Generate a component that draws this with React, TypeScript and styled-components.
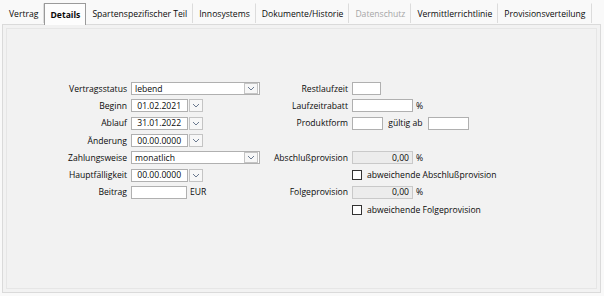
import React from "react";
import styled, { createGlobalStyle } from "styled-components";

const GlobalStyle = createGlobalStyle`
  html, body {
    margin: 0;
    padding: 0;
    background: #f9f9f9;
  }
  body {
    font-family: "Open Sans", "Noto Sans", sans-serif;
    font-size: 8.6px;
    color: #0a0a0a;
  }
`;

const tabs = [
  "Vertrag",
  "Details",
  "Spartenspezifischer Teil",
  "Innosystems",
  "Dokumente/Historie",
  "Datenschutz",
  "Vermittlerrichtlinie",
  "Provisionsverteilung",
];

const Window = styled.div`
  width: 604px;
  height: 296px;
  display: flex;
  flex-direction: column;
  overflow: hidden;
`;

const TabBar = styled.div`
  display: flex;
  align-items: flex-end;
  height: 24px;
  padding-left: 3px;
`;

const Tab = styled.div<{ $active?: boolean; $disabled?: boolean }>`
  height: ${(p) => (p.$active ? "21px" : "19px")};
  display: flex;
  align-items: center;
  padding: 0 5px;
  margin-bottom: ${(p) => (p.$active ? "-1px" : "1px")};
  font-weight: ${(p) => (p.$active ? 700 : 400)};
  color: ${(p) => (p.$disabled ? "#a6a6a6" : "#0a0a0a")};
  background: ${(p) => (p.$active ? "#fdfdfd" : "transparent")};
  border: 1px solid ${(p) => (p.$active ? "#9a9a9a" : "transparent")};
  border-bottom: none;
  border-right: 1px solid ${(p) => (p.$active ? "#9a9a9a" : "#dcdcdc")};
  position: relative;
  z-index: ${(p) => (p.$active ? 1 : 0)};
  white-space: nowrap;
`;

const Panel = styled.div`
  flex: 1;
  margin: 0 3px 3px 2px;
  background: #f2f2f2;
  border: 1px solid #dadada;
  box-shadow: inset 0 0 0 3px #f2f2f2, inset 0 0 0 4px #e6e6e6;
  display: flex;
  padding-top: 55px;
  padding-left: 44px;
`;

const Column = styled.div<{ $label: number; $offset?: number }>`
  display: grid;
  grid-template-columns: ${(p) => p.$label}px auto;
  grid-auto-rows: 17.3px;
  column-gap: 4px;
  align-items: center;
  align-content: start;
  margin-left: ${(p) => p.$offset ?? 0}px;
`;

const Label = styled.div`
  text-align: right;
  white-space: nowrap;
`;

const Cell = styled.div`
  display: flex;
  align-items: center;
  gap: 3px;
  white-space: nowrap;
`;

const Box = styled.div<{ $w: number; $disabled?: boolean }>`
  width: ${(p) => p.$w}px;
  height: 13px;
  box-sizing: border-box;
  border: 1px solid ${(p) => (p.$disabled ? "#c9c9c9" : "#b0b0b0")};
  background: ${(p) => (p.$disabled ? "#ececec" : "#fff")};
  display: flex;
  align-items: center;
  justify-content: ${(p) => (p.$disabled ? "flex-end" : "flex-start")};
  padding: 0 3px;
  position: relative;
`;

const DropBtn = styled.div<{ $inside?: boolean }>`
  width: 14px;
  height: ${(p) => (p.$inside ? "11px" : "13px")};
  box-sizing: border-box;
  border: 1px solid #c4c4c4;
  background: #f7f7f7;
  display: flex;
  align-items: center;
  justify-content: center;
  margin-left: ${(p) => (p.$inside ? "auto" : "-2px")};
  margin-right: ${(p) => (p.$inside ? "-2px" : "0")};
`;

const Check = styled.div`
  width: 10px;
  height: 10px;
  box-sizing: border-box;
  border: 1px solid #333;
  background: #fff;
  margin-right: 2px;
`;

const Chevron = () => (
  <svg width="8" height="5" viewBox="0 0 8 5">
    <polyline points="1,1 4,4 7,1" fill="none" stroke="#6b7a90" strokeWidth="1" />
  </svg>
);

const Select = ({ w, value }: { w: number; value: string }) => (
  <Box $w={w}>
    {value}
    <DropBtn $inside>
      <Chevron />
    </DropBtn>
  </Box>
);

const DateField = ({ value }: { value: string }) => (
  <Cell>
    <Box $w={57}>&nbsp;{value}</Box>
    <DropBtn>
      <Chevron />
    </DropBtn>
  </Cell>
);

const Row = ({ label, children }: { label: string; children?: React.ReactNode }) => (
  <>
    <Label>{label}</Label>
    <Cell>{children}</Cell>
  </>
);

export default function App() {
  return (
    <Window>
      <GlobalStyle />
      <TabBar>
        {tabs.map((t) => (
          <Tab key={t} $active={t === "Details"} $disabled={t === "Datenschutz"}>
            {t}
          </Tab>
        ))}
      </TabBar>
      <Panel>
        <Column $label={80}>
          <Row label="Vertragsstatus">
            <Select w={129} value="lebend" />
          </Row>
          <Row label="Beginn">
            <DateField value="01.02.2021" />
          </Row>
          <Row label="Ablauf">
            <DateField value="31.01.2022" />
          </Row>
          <Row label="Änderung">
            <DateField value="00.00.0000" />
          </Row>
          <Row label="Zahlungsweise">
            <Select w={129} value="monatlich" />
          </Row>
          <Row label="Hauptfälligkeit">
            <DateField value="00.00.0000" />
          </Row>
          <Row label="Beitrag">
            <Box $w={56} />
            EUR
          </Row>
        </Column>
        <Column $label={80} $offset={8}>
          <Row label="Restlaufzeit">
            <Box $w={29} />
          </Row>
          <Row label="Laufzeitrabatt">
            <Box $w={61} />%
          </Row>
          <Row label="Produktform">
            <Box $w={31} />
            &nbsp;gültig ab&nbsp;
            <Box $w={41} />
          </Row>
          <Row label="" />
          <Row label="Abschlußprovision">
            <Box $w={61} $disabled>
              0,00
            </Box>
            %
          </Row>
          <Row label="">
            <Check />
            abweichende Abschlußprovision
          </Row>
          <Row label="Folgeprovision">
            <Box $w={61} $disabled>
              0,00
            </Box>
            %
          </Row>
          <Row label="">
            <Check />
            abweichende Folgeprovision
          </Row>
        </Column>
      </Panel>
    </Window>
  );
}
